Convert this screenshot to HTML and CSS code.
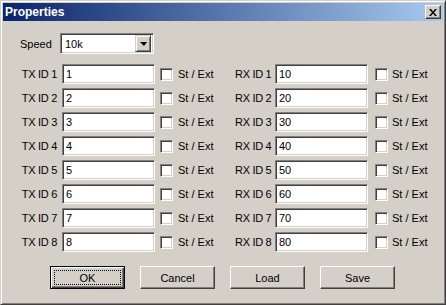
FILE: index.html
```html
<!DOCTYPE html>
<html>
<head>
	<meta charset="utf-8"/>
	<title>Properties</title>
	<link rel="stylesheet" href="styles.css">
</head>
<body>
<div class="window">
	<div class="titlebar">
		<span class="title">Properties</span>
		<span class="close">
			<svg width="8" height="7" viewBox="0 0 8 7"><path d="M0 0h2l2 2.5 2-2.5h2l-3 3.5 3 3.5h-2l-2-2.5-2 2.5h-2l3-3.5z" fill="#000"/></svg>
		</span>
	</div>
	<div class="client">
		<div class="speedrow">
			<span class="speedlbl">Speed</span>
			<div class="combo">
				<span class="combotext">10k</span>
				<span class="drop"><span class="tri"></span></span>
			</div>
		</div>

		<div class="grid">
			<span class="lbl">TX ID 1</span><input class="edit" value="1"><span class="check tx"></span><span class="ctext">St / Ext</span>
			<span class="lbl">RX ID 1</span><input class="edit" value="10"><span class="check rx"></span><span class="ctext">St / Ext</span>

			<span class="lbl">TX ID 2</span><input class="edit" value="2"><span class="check tx"></span><span class="ctext">St / Ext</span>
			<span class="lbl">RX ID 2</span><input class="edit" value="20"><span class="check rx"></span><span class="ctext">St / Ext</span>

			<span class="lbl">TX ID 3</span><input class="edit" value="3"><span class="check tx"></span><span class="ctext">St / Ext</span>
			<span class="lbl">RX ID 3</span><input class="edit" value="30"><span class="check rx"></span><span class="ctext">St / Ext</span>

			<span class="lbl">TX ID 4</span><input class="edit" value="4"><span class="check tx"></span><span class="ctext">St / Ext</span>
			<span class="lbl">RX ID 4</span><input class="edit" value="40"><span class="check rx"></span><span class="ctext">St / Ext</span>

			<span class="lbl">TX ID 5</span><input class="edit" value="5"><span class="check tx"></span><span class="ctext">St / Ext</span>
			<span class="lbl">RX ID 5</span><input class="edit" value="50"><span class="check rx"></span><span class="ctext">St / Ext</span>

			<span class="lbl">TX ID 6</span><input class="edit" value="6"><span class="check tx"></span><span class="ctext">St / Ext</span>
			<span class="lbl">RX ID 6</span><input class="edit" value="60"><span class="check rx"></span><span class="ctext">St / Ext</span>

			<span class="lbl">TX ID 7</span><input class="edit" value="7"><span class="check tx"></span><span class="ctext">St / Ext</span>
			<span class="lbl">RX ID 7</span><input class="edit" value="70"><span class="check rx"></span><span class="ctext">St / Ext</span>

			<span class="lbl">TX ID 8</span><input class="edit" value="8"><span class="check tx"></span><span class="ctext">St / Ext</span>
			<span class="lbl">RX ID 8</span><input class="edit" value="80"><span class="check rx"></span><span class="ctext">St / Ext</span>
		</div>

		<div class="buttons">
			<button class="btn default"><span class="focus">OK</span></button>
			<button class="btn">Cancel</button>
			<button class="btn">Load</button>
			<button class="btn">Save</button>
		</div>
	</div>
</div>
</body>
</html>
```

FILE: styles.css
```css
body{
	margin: 0;
	font-family: "Liberation Sans", Arial, sans-serif;
	font-size: 11px;
	color: #000;
	background: #d4d0c8;
}
.window{
	width: 446px;
	height: 305px;
	box-sizing: border-box;
	background: #d4d0c8;
	border: 1px solid;
	border-color: #d4d0c8 #404040 #404040 #d4d0c8;
	box-shadow: inset 1px 1px #fff, inset -1px -1px #808080;
	padding: 2px;
	display: flex;
	flex-direction: column;
}

/* title bar */
.titlebar{
	flex: none;
	height: 18px;
	background: linear-gradient(to right, #0a246a, #a6caf0);
	display: flex;
	align-items: center;
	justify-content: space-between;
	padding: 0 2px;
	color: #fff;
	font-weight: bold;
	font-size: 12px;
}
.close{
	width: 16px;
	height: 14px;
	box-sizing: border-box;
	background: #d4d0c8;
	border: 1px solid;
	border-color: #fff #404040 #404040 #fff;
	box-shadow: inset -1px -1px #808080;
	display: flex;
	align-items: center;
	justify-content: center;
}

/* speed combo */
.speedrow{
	display: flex;
	align-items: center;
	margin: 12px 0 10px 17px;
}
.speedlbl{
	width: 40px;
}
.combo{
	width: 94px;
	height: 21px;
	box-sizing: border-box;
	background: #fff;
	border: 1px solid;
	border-color: #808080 #fff #fff #808080;
	box-shadow: inset 1px 1px #404040, inset -1px -1px #d4d0c8;
	padding: 2px;
	display: flex;
	align-items: center;
}
.combotext{
	flex: 1;
	padding-left: 2px;
}
.drop{
	width: 16px;
	height: 17px;
	box-sizing: border-box;
	background: #d4d0c8;
	border: 1px solid;
	border-color: #d4d0c8 #404040 #404040 #d4d0c8;
	box-shadow: inset 1px 1px #fff, inset -1px -1px #808080;
	display: flex;
	align-items: center;
	justify-content: center;
}
.tri{
	width: 0;
	height: 0;
	border-left: 4px solid transparent;
	border-right: 3px solid transparent;
	border-top: 4px solid #000;
	margin-top: 1px;
}

/* id rows */
.grid{
	display: grid;
	grid-template-columns: 59px 93px 23px 57px 40px 93px 24px auto;
	grid-auto-rows: 20px;
	row-gap: 4px;
	align-items: center;
}
.lbl{
	text-align: right;
	padding-right: 5px;
	letter-spacing: -0.3px;
	white-space: nowrap;
}
.edit{
	width: 93px;
	height: 20px;
	box-sizing: border-box;
	margin: 0;
	padding: 0 3px;
	background: #fff;
	border: 1px solid;
	border-color: #808080 #fff #fff #808080;
	box-shadow: inset 1px 1px #404040, inset -1px -1px #d4d0c8;
	font-family: "Liberation Sans", Arial, sans-serif;
	font-size: 11px;
	color: #000;
	outline: none;
}
.check{
	width: 13px;
	height: 13px;
	box-sizing: border-box;
	background: #fff;
	border: 1px solid;
	border-color: #808080 #fff #fff #808080;
	box-shadow: inset 1px 1px #404040, inset -1px -1px #d4d0c8;
}
.check.tx{
	margin-left: 5px;
}
.check.rx{
	margin-left: 7px;
}
.ctext{
	white-space: nowrap;
}

/* buttons */
.buttons{
	display: flex;
	gap: 15px;
	margin: 14px 0 0 47px;
}
.btn{
	width: 75px;
	height: 23px;
	box-sizing: border-box;
	margin: 0;
	padding: 0;
	background: #d4d0c8;
	border: 1px solid;
	border-color: #fff #404040 #404040 #fff;
	box-shadow: inset -1px -1px #808080;
	font-family: "Liberation Sans", Arial, sans-serif;
	font-size: 11px;
	color: #000;
	display: flex;
	align-items: center;
	justify-content: center;
}
.btn.default{
	border: 1px solid #000;
	box-shadow: inset 1px 1px #fff, inset -1px -1px #404040, inset -2px -2px #808080;
	padding: 3px;
}
.focus{
	flex: 1;
	align-self: stretch;
	border: 1px dotted #000;
	display: flex;
	align-items: center;
	justify-content: center;
}
```
